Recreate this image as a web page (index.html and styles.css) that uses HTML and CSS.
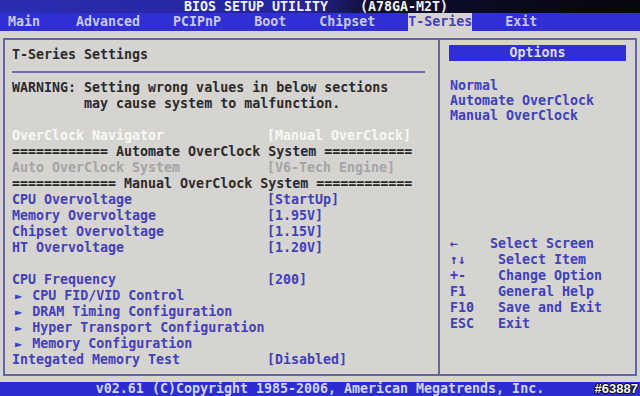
FILE: index.html
```html
<!DOCTYPE html>
<html lang="en">
<head>
    <meta charset="UTF-8">
    <title>BIOS Setup Utility</title>
    <link rel="stylesheet" href="styles.css">
</head>
<body>
    <div class="title-bar">BIOS SETUP UTILITY    (A78GA-M2T)</div>
    <div class="menu-bar">
        <span class="menu-item">Main</span>
        <span class="menu-item">Advanced</span>
        <span class="menu-item">PCIPnP</span>
        <span class="menu-item">Boot</span>
        <span class="menu-item">Chipset</span>
        <span class="menu-item active">T-Series</span>
        <span class="menu-item">Exit</span>
    </div>
    <div class="screen">
        <div class="frame">
            <div class="settings">
                <div class="heading">T-Series Settings</div>
                <div class="rule"></div>
                <div class="warning">WARNING: Setting wrong values in below sections
         may cause system to malfunction.</div>
                <div class="row spacer"></div>
                <div class="row selected"><span class="label">OverClock Navigator</span><span>[Manual OverClock]</span></div>
                <div class="row section">============ Automate OverClock System ===========</div>
                <div class="row disabled"><span class="label">Auto OverClock System</span><span>[V6-Tech Engine]</span></div>
                <div class="row section">============= Manual OverClock System ============</div>
                <div class="row"><span class="label">CPU Overvoltage</span><span>[StartUp]</span></div>
                <div class="row"><span class="label">Memory Overvoltage</span><span>[1.95V]</span></div>
                <div class="row"><span class="label">Chipset Overvoltage</span><span>[1.15V]</span></div>
                <div class="row"><span class="label">HT Overvoltage</span><span>[1.20V]</span></div>
                <div class="row spacer"></div>
                <div class="row"><span class="label">CPU Frequency</span><span>[200]</span></div>
                <div class="row"><span class="arrow">►</span> CPU FID/VID Control</div>
                <div class="row"><span class="arrow">►</span> DRAM Timing Configuration</div>
                <div class="row"><span class="arrow">►</span> Hyper Transport Configuration</div>
                <div class="row"><span class="arrow">►</span> Memory Configuration</div>
                <div class="row"><span class="label">Integated Memory Test</span><span>[Disabled]</span></div>
            </div>
            <div class="sidebar">
                <div class="options-title">Options</div>
                <div class="options">
                    <div>Normal</div>
                    <div>Automate OverClock</div>
                    <div>Manual OverClock</div>
                </div>
                <div class="help">
                    <div class="help-line">←    Select Screen</div>
                    <div class="help-line">↑↓    Select Item</div>
                    <div class="help-line">+-    Change Option</div>
                    <div class="help-line">F1    General Help</div>
                    <div class="help-line">F10   Save and Exit</div>
                    <div class="help-line">ESC   Exit</div>
                </div>
            </div>
        </div>
    </div>
    <div class="footer">
        v02.61 (C)Copyright 1985-2006, American Megatrends, Inc.
        <span class="watermark">#63887</span>
    </div>
</body>
</html>
```

FILE: styles.css
```css
* {
    margin: 0;
    padding: 0;
    box-sizing: border-box;
}
body {
    width: 640px;
    height: 396px;
    overflow: hidden;
    background: #d6d4d0;
    font-family: "DejaVu Sans Mono", "Liberation Mono", monospace;
    font-weight: bold;
    font-size: 13.3px;
    color: #4040bc;
}
.title-bar {
    height: 13px;
    line-height: 13px;
    white-space: pre;
    text-align: center;
    color: #f2f2f2;
    padding-right: 8px;
    background: linear-gradient(90deg, #2c2cb0 0%, #24249c 48%, #0e0e30 58%, #06060e 100%);
}
.menu-bar {
    height: 18px;
    line-height: 18px;
    display: flex;
    gap: 33px;
    padding-left: 8px;
    background: #2f2fd4;
    color: #c8c8ee;
}
.menu-item:nth-child(2) {
    margin-left: 3px;
}
.menu-item.active {
    background: #d6d4d0;
    color: #4040bc;
    margin-left: 0;
}
.screen {
    height: 351px;
    padding: 7px 3px 0 3px;
}
.frame {
    height: 338px;
    display: flex;
    border: 2px solid #6464a8;
}
.settings {
    width: 433px;
    padding: 7px 0 0 7px;
}
.heading {
    line-height: 16px;
    color: #2a2a2e;
}
.rule {
    width: 413px;
    height: 2px;
    margin: 8px 0 7px;
    background: #7070b0;
}
.warning {
    line-height: 16px;
    white-space: pre;
    color: #2a2a2e;
}
.row {
    height: 16px;
    line-height: 16px;
    white-space: pre;
    display: flex;
}
.label {
    width: 255px;
}
.arrow {
    font-size: 12px;
    padding: 0 2px 0 3px;
}
.selected {
    color: #f8f8f8;
}
.disabled {
    color: #a4a4a8;
}
.section {
    color: #2a2a2e;
}
.sidebar {
    flex: 1;
    border-left: 2px solid #6464a8;
    display: flex;
    flex-direction: column;
}
.options-title {
    width: 177px;
    height: 16px;
    line-height: 16px;
    margin: 5px 0 0 9px;
    text-align: center;
    background: #2f2fd4;
    color: #dcdcf4;
}
.options {
    margin-top: 17px;
    padding-left: 10px;
    line-height: 15px;
}
.help {
    margin-top: 113px;
    padding-left: 10px;
}
.help-line {
    height: 16px;
    line-height: 16px;
    white-space: pre;
}
.footer {
    position: relative;
    height: 14px;
    line-height: 14px;
    text-align: center;
    background: #2c2cd0;
    color: #d4d4f2;
}
.watermark {
    position: absolute;
    right: 2px;
    top: 0;
    font-family: "Liberation Sans", Arial, sans-serif;
    font-size: 13px;
    color: #ffffff;
    text-shadow: -1px 0 #000, 1px 0 #000, 0 -1px #000, 0 1px #000;
}
```
